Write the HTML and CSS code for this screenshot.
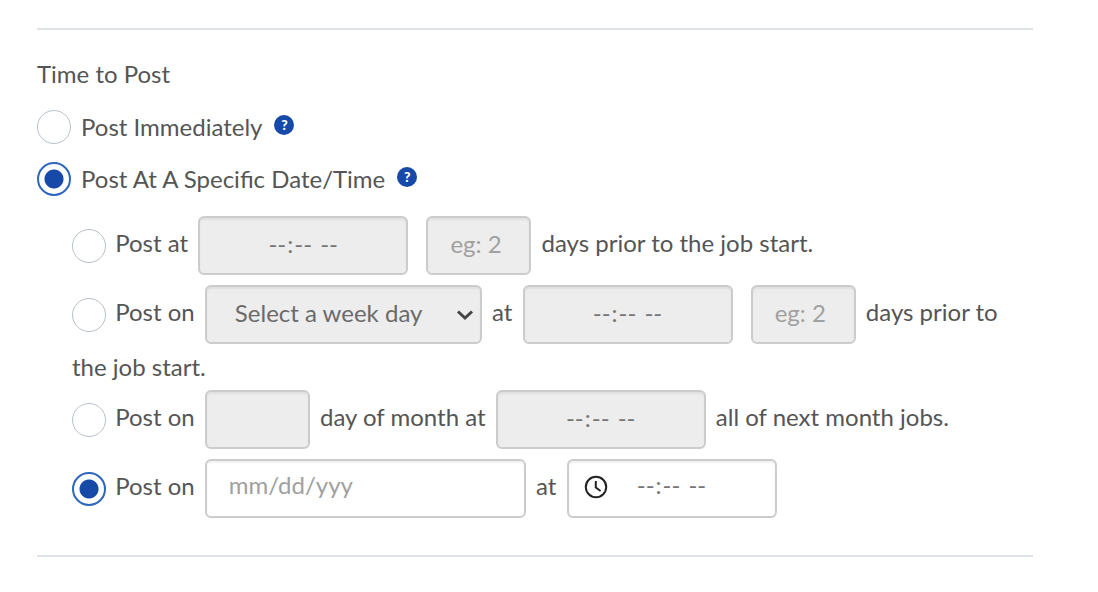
FILE: index.html
```html
<!DOCTYPE html>
<html lang="en">
<head>
<meta charset="utf-8">
<meta name="viewport" content="width=device-width, initial-scale=1">
<title>Time to Post</title>
<link rel="stylesheet" href="styles.css">
</head>
<body>
<main class="page">
  <form class="section">
    <h2 class="title">Time to Post</h2>
    <div class="choice">
      <input class="radio" type="radio" name="when" id="now">
      <label for="now">Post Immediately</label>
      <button class="help" type="button" aria-label="About posting immediately">?</button>
    </div>
    <div class="choice">
      <input class="radio" type="radio" name="when" id="later" checked>
      <label for="later">Post At A Specific Date/Time</label>
      <button class="help" type="button" aria-label="About posting at a specific time">?</button>
    </div>
    <div class="schedule">
      <div class="rule">
        <input class="radio" type="radio" name="schedule" id="daily">
        <label for="daily">Post at</label>
        <input class="field time" type="time" aria-label="Time" disabled>
        <input class="field days" type="text" placeholder="eg: 2" aria-label="Days prior" disabled>
        days prior to the job start.
      </div>
      <div class="rule">
        <input class="radio" type="radio" name="schedule" id="weekly">
        <label for="weekly">Post on</label>
        <span class="picker">
          <select class="field weekday" aria-label="Week day" disabled>
            <option>Select a week day</option>
          </select>
          <svg class="chevron" viewBox="0 0 18 12" aria-hidden="true"><path d="M2 2.5l7 6.5 7-6.5"/></svg>
        </span>
        at
        <input class="field time" type="time" aria-label="Time" disabled>
        <input class="field days" type="text" placeholder="eg: 2" aria-label="Days prior" disabled>
        days prior to the job start.
      </div>
      <div class="rule">
        <input class="radio" type="radio" name="schedule" id="monthly">
        <label for="monthly">Post on</label>
        <input class="field monthday" type="text" aria-label="Day of month" disabled>
        day of month at
        <input class="field time" type="time" aria-label="Time" disabled>
        all of next month jobs.
      </div>
      <div class="rule">
        <input class="radio" type="radio" name="schedule" id="once" checked>
        <label for="once">Post on</label>
        <input class="field date" type="text" placeholder="mm/dd/yyy" aria-label="Date">
        at
        <span class="picker">
          <svg class="clock" viewBox="0 0 24 24" aria-hidden="true"><circle cx="12" cy="12" r="10.2"/><path d="M11.8 6v6.6l4.8 3.4"/></svg>
          <input class="field time" type="time" aria-label="Time">
        </span>
      </div>
    </div>
  </form>
</main>
</body>
</html>
```
FILE: styles.css
```css
* { box-sizing: border-box; }

body {
  margin: 0;
  background: #fff;
  color: #555;
  font: 24px/36px Lato, "Liberation Sans", sans-serif;
}

.page { padding: 28px 65px 28px 37px; }

.section {
  padding: 26px 0 32px;
  border-top: 2px solid #dee2e6;
  border-bottom: 2px solid #dee2e6;
}

.title {
  margin: 0 0 17px;
  font-size: 24px;
  font-weight: 400;
}

.choice {
  display: flex;
  align-items: center;
  gap: 10px;
  margin-bottom: 16px;
}

.radio {
  appearance: none;
  width: 34px;
  height: 34px;
  margin: 0;
  border: 1px solid #b9c0c8;
  border-radius: 50%;
  background: #fff;
  vertical-align: middle;
}

.radio:checked {
  border: 2px solid #2c66bd;
  background: radial-gradient(circle, #174aa8 9px, #fff 10px);
}

.help {
  width: 20px;
  height: 20px;
  margin: 0 0 4px 2px;
  padding: 0;
  border: 0;
  border-radius: 50%;
  background: #174aa8;
  color: #fff;
  font: 900 14px/20px Lato, sans-serif;
  text-align: center;
}

.schedule { padding: 0 16px 0 35px; margin-top: -2px; }

.rule .radio { margin-right: 3px; }

.field {
  height: 59px;
  margin: 5px 4px;
  padding: 0 22px 4px;
  border: 2px solid #ccc;
  border-radius: 6px;
  background: #fff;
  box-shadow: inset 0 2px 2px rgba(0, 0, 0, 0.06);
  color: #6a6a6a;
  font: inherit;
  vertical-align: middle;
}

.field:disabled { background: #ededed; opacity: 1; }
.field:enabled { padding-bottom: 8px; }
.field::placeholder { color: #a0a0a0; opacity: 1; }

.time { width: 210px; color: #777; }
.time::-webkit-calendar-picker-indicator { display: none; }
.time::-webkit-datetime-edit { text-align: center; }
.days { width: 105px; margin-left: 8px; }
.monthday { width: 105px; }
.date { width: 321px; }

.weekday {
  appearance: none;
  width: 277px;
  padding-left: 28px;
}

.picker { position: relative; display: inline-flex; vertical-align: middle; }

.chevron {
  position: absolute;
  top: 29px;
  right: 12px;
  width: 18px;
  height: 12px;
  fill: none;
  stroke: #454545;
  stroke-width: 3;
}

.clock {
  position: absolute;
  top: 21px;
  left: 21px;
  width: 24px;
  height: 24px;
  fill: none;
  stroke: #222;
  stroke-width: 2;
}
```
